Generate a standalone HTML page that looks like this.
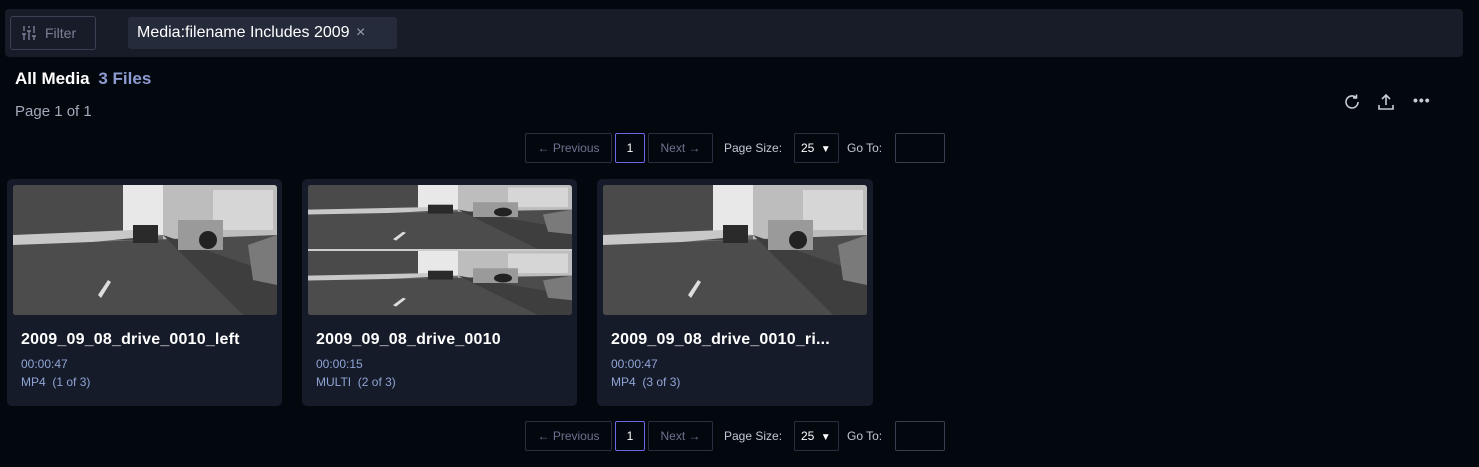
<!DOCTYPE html>
<html><head><style>
*{box-sizing:border-box;margin:0;padding:0}
body{width:1479px;height:467px;background:#03070e;font-family:"Liberation Sans",sans-serif;position:relative;overflow:hidden;color:#fff}
.abs{position:absolute}
.bar{left:5px;top:9px;width:1458px;height:48px;background:#171c28;border-radius:4px}
.filter{left:10px;top:16px;width:86px;height:34px;border:1px solid #3a4154;border-radius:3px;color:#7a8196;font-size:14px;line-height:32px;padding-left:34px}
.chip{left:128px;top:17px;width:269px;height:32px;background:#252b3a;border-radius:3px;font-size:16px;line-height:32px;padding-left:9px;color:#fff}
.btn{height:30px;border:1px solid #2b3040;border-radius:2px;font-size:12px;color:#6c7390;line-height:28px;text-align:center}
.lbl{font-size:12px;color:#c4c8d4}
.card{width:275px;height:227px;background:#161b29;border-radius:5px;top:179px}
.card svg{position:absolute;left:6px;top:6px;border-radius:3px}
.t{position:absolute;left:14px;top:152px;font-size:16px;font-weight:bold;color:#fff;letter-spacing:0.2px}
.m{position:absolute;left:14px;font-size:12px;color:#8fa4d6}
</style></head><body>
<div class="abs bar"></div>
<div class="abs filter">Filter
<svg class="abs" style="left:10px;top:8px" width="16" height="16" viewBox="0 0 16 16" fill="none" stroke="#7a8196" stroke-width="1.4"><path d="M3 1v5M3 9v6M1 9h4M8 1v2M8 6v9M6 6h4M13 1v7M13 11v4M11 11h4"/></svg></div>
<div class="abs chip">Media:filename Includes 2009 <span style="color:#9aa0b0;margin-left:2px">×</span></div>
<div class="abs" style="left:15px;top:69px;font-size:17px;font-weight:bold">All Media <span style="color:#8d9bd0;margin-left:4px">3 Files</span></div>
<div class="abs" style="left:15px;top:103px;font-size:15px;color:#a4aabb">Page 1 of 1</div>
<svg class="abs" style="left:1343px;top:93px" width="18" height="18" viewBox="0 0 18 18" fill="none" stroke="#c8ccd6" stroke-width="1.6"><path d="M15 9a6 6 0 1 1-2-4.5M13.5 1.5v3.5H10"/></svg>
<svg class="abs" style="left:1377px;top:93px" width="18" height="18" viewBox="0 0 18 18" fill="none" stroke="#c8ccd6" stroke-width="1.6"><path d="M9 12V2M5 6l4-4 4 4M2 12v4h14v-4"/></svg>
<div class="abs" style="left:1413px;top:92px;font-size:14px;color:#c8ccd6;letter-spacing:1px;font-weight:bold">•••</div>

<div>
<div class="abs btn" style="left:525px;top:133px;width:87px">← Previous</div>
<div class="abs btn" style="left:615px;top:133px;width:30px;border-color:#6a66e8;color:#fff">1</div>
<div class="abs btn" style="left:648px;top:133px;width:65px">Next →</div>
<div class="abs lbl" style="left:724px;top:141px">Page Size:</div>
<div class="abs btn" style="left:794px;top:133px;width:45px;color:#fff;text-align:left;padding-left:6px">25 <span style="font-size:10px;margin-left:3px">▼</span></div>
<div class="abs lbl" style="left:847px;top:141px">Go To:</div>
<div class="abs btn" style="left:895px;top:133px;width:50px;border-color:#3a4050"></div>
</div>
<div>
<div class="abs btn" style="left:525px;top:421px;width:87px">← Previous</div>
<div class="abs btn" style="left:615px;top:421px;width:30px;border-color:#6a66e8;color:#fff">1</div>
<div class="abs btn" style="left:648px;top:421px;width:65px">Next →</div>
<div class="abs lbl" style="left:724px;top:429px">Page Size:</div>
<div class="abs btn" style="left:794px;top:421px;width:45px;color:#fff;text-align:left;padding-left:6px">25 <span style="font-size:10px;margin-left:3px">▼</span></div>
<div class="abs lbl" style="left:847px;top:429px">Go To:</div>
<div class="abs btn" style="left:895px;top:421px;width:50px;border-color:#3a4050"></div>
</div>

<svg width="0" height="0" style="position:absolute"><defs>
<g id="scene">
<rect width="264" height="130" fill="#555"/>
<rect width="264" height="60" fill="#6e6e6e"/>
<rect x="0" y="0" width="120" height="55" fill="#4a4a4a"/>
<rect x="110" y="0" width="40" height="50" fill="#e8e8e8"/>
<rect x="150" y="0" width="114" height="60" fill="#bdbdbd"/>
<rect x="200" y="5" width="60" height="40" fill="#d6d6d6"/>
<path d="M0 50 L120 45 L150 50 L0 65Z" fill="#c8c8c8"/>
<path d="M0 60 L264 50 L264 130 L0 130Z" fill="#4c4c4c"/>
<path d="M150 50 L264 90 L264 130 L230 130Z" fill="#3e3e3e"/>
<rect x="120" y="40" width="25" height="18" fill="#2a2a2a"/>
<rect x="165" y="35" width="45" height="30" fill="#9a9a9a"/>
<circle cx="195" cy="55" r="9" fill="#222"/>
<path d="M235 60 L264 50 L264 100 L240 95Z" fill="#7a7a7a"/>
<path d="M85 110 L95 95 L98 97 L88 113Z" fill="#ddd"/>
</g></defs></svg>

<div class="abs card" style="left:7px">
<svg width="264" height="130"><use href="#scene"/></svg>
<div class="t">2009_09_08_drive_0010_left</div>
<div class="m" style="top:178px">00:00:47</div>
<div class="m" style="top:196px">MP4 &nbsp;(1 of 3)</div>
</div>
<div class="abs card" style="left:302px">
<svg width="264" height="130"><svg width="264" height="64" viewBox="0 0 264 130" preserveAspectRatio="none"><use href="#scene"/></svg><rect y="64" width="264" height="2" fill="#ccc"/><svg y="66" width="264" height="64" viewBox="0 0 264 130" preserveAspectRatio="none"><use href="#scene"/></svg></svg>
<div class="t">2009_09_08_drive_0010</div>
<div class="m" style="top:178px">00:00:15</div>
<div class="m" style="top:196px">MULTI &nbsp;(2 of 3)</div>
</div>
<div class="abs card" style="left:597px;width:276px">
<svg width="264" height="130"><use href="#scene"/></svg>
<div class="t">2009_09_08_drive_0010_ri...</div>
<div class="m" style="top:178px">00:00:47</div>
<div class="m" style="top:196px">MP4 &nbsp;(3 of 3)</div>
</div>
</body></html>
